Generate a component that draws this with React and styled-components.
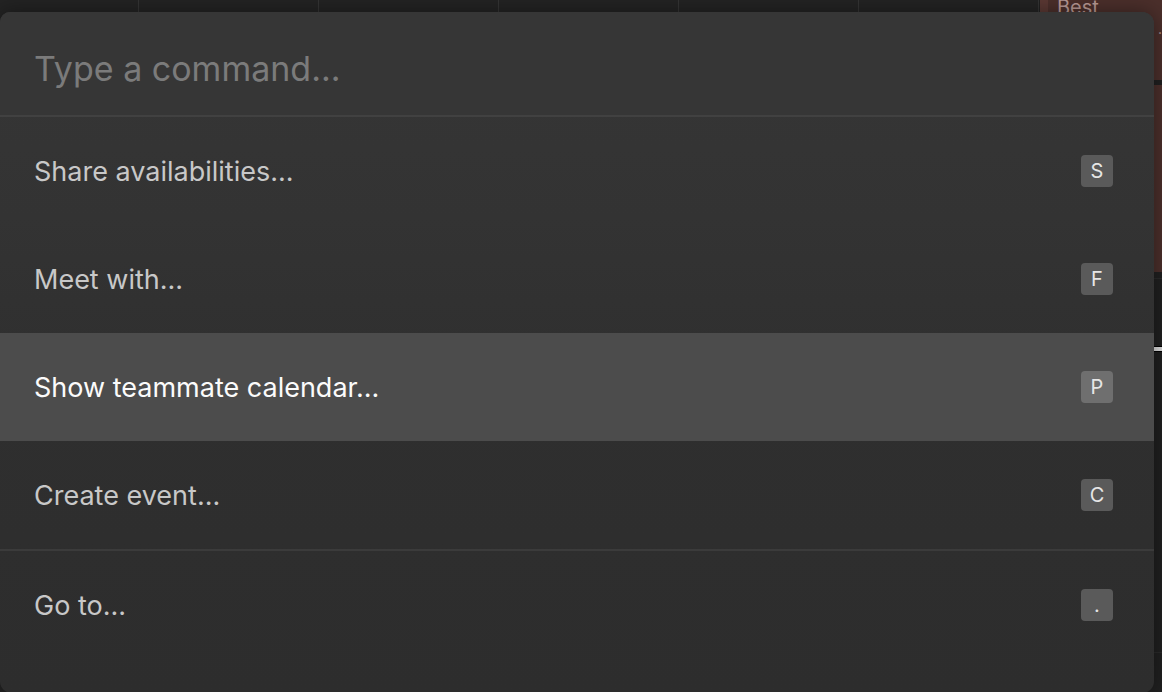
import React from "react";
import styled, { createGlobalStyle } from "styled-components";

const GlobalStyle = createGlobalStyle`
  html, body { margin: 0; padding: 0; background: #212121; overflow: hidden; }
  * { box-sizing: border-box; }
`;

const Page = styled.div`
  position: relative;
  width: 1162px;
  height: 692px;
  overflow: hidden;
  font-family: Inter, "Liberation Sans", sans-serif;
`;

const Calendar = styled.div`
  display: grid;
  grid-template-columns: 138px repeat(5, 180px) 1fr;
  height: 100%;
  background: #232323;
`;

const DayColumn = styled.div`
  position: relative;
  border-left: ${(p) => (p.$first ? "none" : "1px solid #343434")};
  background: ${(p) => (p.$last ? "#202020" : "#232323")};
  background-image: ${(p) =>
    p.$last
      ? "repeating-linear-gradient(to bottom, transparent 0, transparent 278px, #2a2a2a 278px, #2a2a2a 279px, transparent 279px, transparent 374px)"
      : "none"};
`;

const Event = styled.div`
  position: absolute;
  left: 1px;
  right: 0;
  top: ${(p) => p.$top}px;
  height: ${(p) => p.$height}px;
  background: #4b2f2b;
  border-left: 8px solid #5a3833;
  padding: ${(p) => p.$padTop || 0}px 0 0 9px;
  color: #b89994;
  font-size: 20px;
  line-height: 22px;
  overflow: hidden;
`;

const EventSub = styled.div`
  color: #b89994;
  font-size: 14px;
  padding-left: 101px;
  margin-top: 4px;
`;

const NowLine = styled.div`
  position: absolute;
  left: 0;
  right: 0;
  top: 346px;
  height: 6px;
  background: #dcdcdc;
  border-top: 1px solid #000;
  border-bottom: 1px solid #000;
`;

const Palette = styled.div`
  position: absolute;
  top: 12px;
  left: 0;
  width: 1154px;
  height: 681px;
  border-radius: 10px 12px 12px 12px;
  overflow: hidden;
  background: linear-gradient(to bottom, #363636 0%, #333333 30%, #2f2f2f 55%, #2d2d2d 100%);
  box-shadow: 0 0 20px rgba(0, 0, 0, 0.4);
  display: flex;
  flex-direction: column;
`;

const InputBar = styled.div`
  height: 105px;
  flex: none;
  display: flex;
  align-items: center;
  padding: 10px 0 0 34px;
  background: #363636;
  border-bottom: 2px solid #414141;
`;

const CommandInput = styled.input`
  flex: 1;
  border: none;
  outline: none;
  background: transparent;
  font-family: inherit;
  font-size: 34px;
  color: #e0e0e0;
  padding: 0;
  &::placeholder {
    color: #7b7b7b;
  }
`;

const Group = styled.div`
  display: flex;
  flex-direction: column;
  border-bottom: ${(p) => (p.$divided ? "2px solid #3b3b3b" : "none")};
`;

const Row = styled.div`
  height: 108px;
  display: flex;
  align-items: center;
  justify-content: space-between;
  padding: 0 41px 0 34px;
  background: ${(p) => (p.$active ? "#4c4c4c" : "transparent")};
`;

const Label = styled.span`
  font-size: 27px;
  color: ${(p) => (p.$active ? "#fbfbfb" : "#c8c8c8")};
`;

const Key = styled.span`
  width: 32px;
  height: 32px;
  border-radius: 4px;
  display: flex;
  align-items: center;
  justify-content: center;
  font-size: 20px;
  color: #e6e6e6;
  background: ${(p) => (p.$active ? "#6f6f6f" : "#5a5a5a")};
`;

const groups = [
  [
    { label: "Share availabilities...", key: "S" },
    { label: "Meet with...", key: "F" },
    { label: "Show teammate calendar...", key: "P", active: true },
    { label: "Create event...", key: "C" },
  ],
  [{ label: "Go to...", key: "." }],
];

export default function App() {
  return (
    <>
      <GlobalStyle />
      <Page>
        <Calendar>
          <DayColumn $first />
          <DayColumn />
          <DayColumn />
          <DayColumn />
          <DayColumn />
          <DayColumn />
          <DayColumn $last>
            <Event $top={-4} $height={84}>
              Best
              <EventSub>·</EventSub>
            </Event>
            <Event $top={85} $height={187} $padTop={10}>
              Cal
            </Event>
            <NowLine />
          </DayColumn>
        </Calendar>
        <Palette>
          <InputBar>
            <CommandInput placeholder="Type a command..." />
          </InputBar>
          {groups.map((items, gi) => (
            <Group key={gi} $divided={gi < groups.length - 1}>
              {items.map((it) => (
                <Row key={it.label} $active={it.active}>
                  <Label $active={it.active}>{it.label}</Label>
                  <Key $active={it.active}>{it.key}</Key>
                </Row>
              ))}
            </Group>
          ))}
        </Palette>
      </Page>
    </>
  );
}
